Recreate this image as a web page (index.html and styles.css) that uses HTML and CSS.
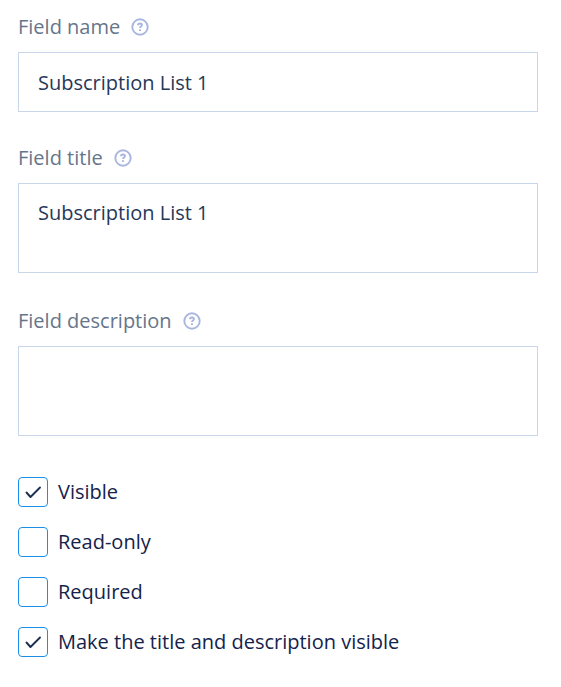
FILE: index.html
```html
<!DOCTYPE html>
<html lang="en">
<head>
<meta charset="utf-8">
<title>Field settings</title>
<link rel="stylesheet" href="styles.css">
</head>
<body>
<form class="settings">
  <div class="field">
    <div class="field-head">
      <label for="name">Field name</label>
      <button class="help" type="button" aria-label="Help"><svg viewBox="0 0 18 18"><circle cx="9" cy="9" r="7.7"/><path d="M7 7.3C7 6 7.9 5.5 9 5.5s2 .6 2 1.6c0 1.4-2 1.3-2 2.9M9 11.2v1.8"/></svg></button>
    </div>
    <input class="control" id="name" type="text" value="Subscription List 1">
  </div>
  <div class="field field-long">
    <div class="field-head">
      <label for="title">Field title</label>
      <button class="help" type="button" aria-label="Help"><svg viewBox="0 0 18 18"><circle cx="9" cy="9" r="7.7"/><path d="M7 7.3C7 6 7.9 5.5 9 5.5s2 .6 2 1.6c0 1.4-2 1.3-2 2.9M9 11.2v1.8"/></svg></button>
    </div>
    <textarea class="control area" id="title">Subscription List 1</textarea>
  </div>
  <div class="field field-long">
    <div class="field-head">
      <label for="description">Field description</label>
      <button class="help" type="button" aria-label="Help"><svg viewBox="0 0 18 18"><circle cx="9" cy="9" r="7.7"/><path d="M7 7.3C7 6 7.9 5.5 9 5.5s2 .6 2 1.6c0 1.4-2 1.3-2 2.9M9 11.2v1.8"/></svg></button>
    </div>
    <textarea class="control area" id="description"></textarea>
  </div>
  <div class="options">
    <label class="option"><span class="box"><input type="checkbox" checked><svg viewBox="0 0 30 30"><path d="M8.5 15.5l4 4.5L22 10.5"/></svg></span>Visible</label>
    <label class="option"><span class="box"><input type="checkbox"><svg viewBox="0 0 30 30"><path d="M8.5 15.5l4 4.5L22 10.5"/></svg></span>Read-only</label>
    <label class="option"><span class="box"><input type="checkbox"><svg viewBox="0 0 30 30"><path d="M8.5 15.5l4 4.5L22 10.5"/></svg></span>Required</label>
    <label class="option"><span class="box"><input type="checkbox" checked><svg viewBox="0 0 30 30"><path d="M8.5 15.5l4 4.5L22 10.5"/></svg></span>Make the title and description visible</label>
  </div>
</form>
</body>
</html>
```

FILE: styles.css
```css
* { box-sizing: border-box; }
body {
  margin: 0;
  background: #fff;
  font: 20px/30px "Open Sans", "Noto Sans", sans-serif;
  color: #14234b;
}
.settings { padding: 12px 23px 30px 18px; }
.field { margin-bottom: 31px; }
.field-long { margin-bottom: 33px; }
.field-head {
  display: flex;
  align-items: center;
  gap: 11px;
  margin-bottom: 10px;
  color: #66758a;
}
.help {
  display: flex;
  padding: 0;
  border: 0;
  background: none;
}
.help svg {
  width: 18px;
  height: 18px;
  fill: none;
  stroke: #a9b6e0;
  stroke-width: 1.9;
}
.control {
  display: block;
  width: 100%;
  height: 60px;
  padding: 14px 19px;
  border: 1px solid #c9d6ea;
  border-radius: 0;
  background: #fff;
  color: #263859;
  font: inherit;
  outline: 0;
}
.area {
  height: 90px;
  resize: none;
  overflow: auto;
}
.options {
  display: grid;
  gap: 20px;
  padding-top: 8px;
}
.option {
  display: flex;
  align-items: center;
  gap: 10px;
}
.box {
  display: grid;
  flex: none;
}
.box > * { grid-area: 1 / 1; }
.box input {
  appearance: none;
  width: 30px;
  height: 30px;
  margin: 0;
  border: 1px solid #1a8fe8;
  border-radius: 4px;
  background: #fff;
}
.box svg {
  width: 30px;
  height: 30px;
  fill: none;
  stroke: #1b2f52;
  stroke-width: 1.9;
  stroke-linecap: round;
  stroke-linejoin: round;
  visibility: hidden;
  pointer-events: none;
}
.box input:checked + svg { visibility: visible; }
```
